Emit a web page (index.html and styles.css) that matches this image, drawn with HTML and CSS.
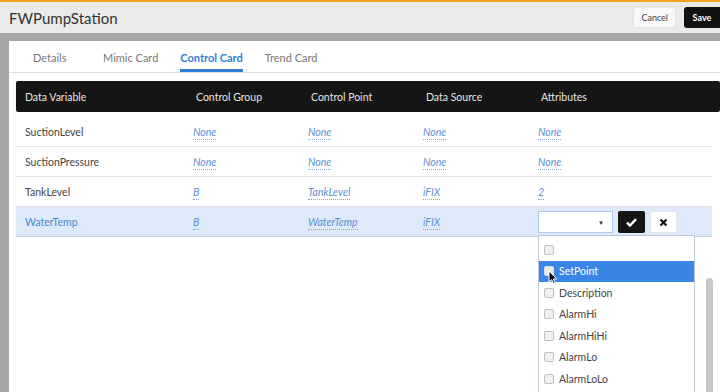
FILE: index.html
```html
<!DOCTYPE html>
<html lang="en">
<head>
  <meta charset="UTF-8">
  <title>FWPumpStation</title>
  <link rel="stylesheet" href="styles.css">
</head>
<body>
  <div class="topbar">
    <div class="title">FWPumpStation</div>
    <button class="btn-cancel">Cancel</button>
    <button class="btn-save">Save</button>
  </div>

  <div class="panel">
    <div class="tabs">
      <div class="tab">Details</div>
      <div class="tab">Mimic Card</div>
      <div class="tab active">Control Card</div>
      <div class="tab">Trend Card</div>
    </div>

    <div class="grid">
      <div class="head">
        <div class="th">Data Variable</div>
        <div class="th">Control Group</div>
        <div class="th">Control Point</div>
        <div class="th">Data Source</div>
        <div class="th">Attributes</div>
      </div>

      <div class="row">
        <div class="cell name">SuctionLevel</div>
        <div class="cell"><span class="val">None</span></div>
        <div class="cell"><span class="val">None</span></div>
        <div class="cell"><span class="val">None</span></div>
        <div class="cell"><span class="val">None</span></div>
      </div>
      <div class="row">
        <div class="cell name">SuctionPressure</div>
        <div class="cell"><span class="val">None</span></div>
        <div class="cell"><span class="val">None</span></div>
        <div class="cell"><span class="val">None</span></div>
        <div class="cell"><span class="val">None</span></div>
      </div>
      <div class="row">
        <div class="cell name">TankLevel</div>
        <div class="cell"><span class="val">B</span></div>
        <div class="cell"><span class="val">TankLevel</span></div>
        <div class="cell"><span class="val">iFIX</span></div>
        <div class="cell"><span class="val">2</span></div>
      </div>
      <div class="row editing">
        <div class="cell name">WaterTemp</div>
        <div class="cell"><span class="val">B</span></div>
        <div class="cell"><span class="val">WaterTemp</span></div>
        <div class="cell"><span class="val">iFIX</span></div>
        <div class="cell editor">
          <div class="select"><span class="caret">&#9660;</span></div>
          <button class="ok">
            <svg width="11" height="9" viewBox="0 0 11 9"><path d="M1 4.6 L4 7.5 L10 1.2" fill="none" stroke="#fff" stroke-width="2.4"/></svg>
          </button>
          <button class="cancel-x">
            <svg width="9" height="9" viewBox="0 0 9 9"><path d="M1.5 1.5 L7.5 7.5 M7.5 1.5 L1.5 7.5" stroke="#111" stroke-width="2.2"/></svg>
          </button>

          <div class="menu">
            <div class="opt"><span class="box"></span></div>
            <div class="opt hover">
              <span class="box"></span>SetPoint
              <svg class="cursor" width="10" height="15" viewBox="0 0 10 15"><path d="M1 1 L1 12 L3.6 9.6 L5.6 14 L7.2 13.3 L5.3 9 L8.8 9 Z" fill="#111" stroke="#fff" stroke-width="1"/></svg>
            </div>
            <div class="opt"><span class="box"></span>Description</div>
            <div class="opt"><span class="box"></span>AlarmHi</div>
            <div class="opt"><span class="box"></span>AlarmHiHi</div>
            <div class="opt"><span class="box"></span>AlarmLo</div>
            <div class="opt"><span class="box"></span>AlarmLoLo</div>
          </div>
        </div>
      </div>
    </div>

    <div class="thumb"></div>
  </div>
</body>
</html>
```

FILE: styles.css
```css
body {
  margin: 0;
  height: 392px;
  overflow: hidden;
  background: #a7a7a7;
  font-family: Lato, "Open Sans", sans-serif;
  display: flex;
  flex-direction: column;
}

.topbar {
  height: 31px;
  border-top: 2px solid #f2a51f;
  background: #eaeaea;
  display: flex;
  align-items: center;
  padding-left: 9px;
}

.title {
  flex: 1;
  font-size: 15px;
  color: #333;
}

.btn-cancel,
.btn-save {
  font-family: inherit;
  font-size: 9px;
  height: 21px;
  border-radius: 3px;
  padding: 0 7px;
}

.btn-cancel {
  background: #f8f8f8;
  border: 1px solid #e2e2e2;
  color: #444;
  margin-right: 8px;
}

.btn-save {
  background: #111;
  color: #fff;
  border: none;
  font-weight: bold;
  width: 36px;
  border-radius: 3px 0 0 3px;
}

.panel {
  position: relative;
  flex: 1;
  margin: 8px 0 0 9px;
  background: #fff;
}

.tabs {
  display: flex;
  height: 31px;
  padding-left: 24px;
  border-bottom: 1px solid #dedede;
}

.tab {
  min-width: 48px;
  margin-right: 22px;
  font-size: 11px;
  color: #777;
  padding-top: 10px;
  box-sizing: border-box;
}

.tab.active {
  color: #2f7fd8;
  font-weight: bold;
  border-bottom: 3px solid #2f7fd8;
  height: 31px;
}

.grid {
  margin: 8px 0 0 7px;
}

.head,
.row {
  display: grid;
  grid-template-columns: 177px 115px 115px 115px 1fr;
  align-items: center;
}

.head {
  height: 31px;
  background: #151515;
  border-radius: 2px;
  margin-bottom: 5px;
}

.th {
  color: #e4e4e4;
  font-size: 10.5px;
  padding-left: 3px;
}

.th:first-child {
  padding-left: 9px;
}

.row {
  height: 30px;
  padding-top: 1px;
  box-sizing: border-box;
  border-bottom: 1px solid #e4e4e4;
  margin-right: 8px;
}

.cell {
  font-size: 10.5px;
  color: #444;
}

.cell.name {
  padding-left: 9px;
}

.val {
  font-style: italic;
  color: #5b8fd2;
  border-bottom: 1px dotted #7ea7dc;
  padding-bottom: 1px;
}

.row.editing {
  background: #deeafa;
  border-bottom-color: #c5d2e2;
}

.row.editing .name {
  color: #4b86d2;
}

.editor {
  position: relative;
  display: flex;
  align-items: center;
  gap: 5px;
}

.select {
  width: 73px;
  height: 20px;
  background: #fff;
  border: 1px solid #a9c5ea;
  display: flex;
  align-items: center;
  justify-content: flex-end;
}

.caret {
  font-size: 6px;
  color: #333;
  margin-right: 8px;
}

.ok,
.cancel-x {
  width: 27px;
  height: 22px;
  padding: 0;
  display: flex;
  align-items: center;
  justify-content: center;
  border-radius: 2px;
}

.ok {
  background: #151515;
  border: none;
}

.cancel-x {
  background: #fff;
  border: 1px solid #e6e6e6;
}

.menu {
  position: absolute;
  top: 24px;
  left: 0;
  width: 155px;
  height: 170px;
  background: #fff;
  border: 1px solid #bcc8dc;
  padding-top: 3px;
}

.opt {
  position: relative;
  height: 21.5px;
  display: flex;
  align-items: center;
  padding-left: 5px;
  font-size: 10.5px;
  color: #444;
}

.opt.hover {
  background: #3a86e6;
  color: #fff;
}

.box {
  width: 8px;
  height: 8px;
  border: 1px solid #c2c2c2;
  background: #f0f0f0;
  border-radius: 2px;
  margin-right: 5px;
}

.opt.hover .box {
  background: #e8e8e8;
  border-color: #ddd;
}

.cursor {
  position: absolute;
  left: 9px;
  top: 9px;
}

.thumb {
  position: absolute;
  right: 7px;
  top: 237px;
  width: 7px;
  height: 120px;
  background: #c6c6c6;
  border-radius: 4px 4px 0 0;
}
```
